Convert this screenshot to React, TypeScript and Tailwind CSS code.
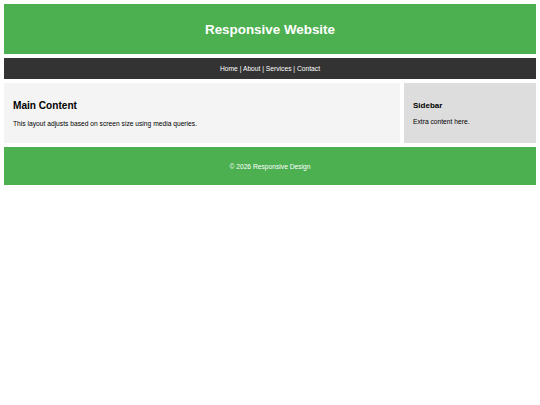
export default function App() {
  return (
    <div className="min-h-screen bg-white font-['Liberation_Sans',Arial,sans-serif] text-black">
      <div className="flex flex-col gap-[4px] p-[4px]">
        <header className="flex h-[50px] items-center justify-center bg-[#4caf50] pt-[1px] text-white">
          <h1 className="text-[13.4px] font-bold leading-none">Responsive Website</h1>
        </header>
        <nav className="flex h-[21px] items-center justify-center bg-[#333333] pt-[1px] text-[6.7px] text-white">
          Home | About | Services | Contact
        </nav>
        <div className="flex h-[60px] gap-[4px]">
          <main className="flex w-[396px] flex-col justify-center bg-[#f4f4f4] px-[9px]">
            <h2 className="mt-[3px] text-[10.1px] font-bold leading-none">Main Content</h2>
            <p className="mt-[10px] text-[6.7px] leading-none">
              This layout adjusts based on screen size using media queries.
            </p>
          </main>
          <aside className="flex flex-1 flex-col justify-center bg-[#dddddd] px-[9px]">
            <h3 className="mt-[1px] text-[8px] font-bold leading-none">Sidebar</h3>
            <p className="mt-[9px] text-[6.7px] leading-none">Extra content here.</p>
          </aside>
        </div>
        <footer className="flex h-[38px] items-center justify-center bg-[#4caf50] pt-[2px] text-[6.7px] text-white">
          © 2026 Responsive Design
        </footer>
      </div>
    </div>
  )
}
